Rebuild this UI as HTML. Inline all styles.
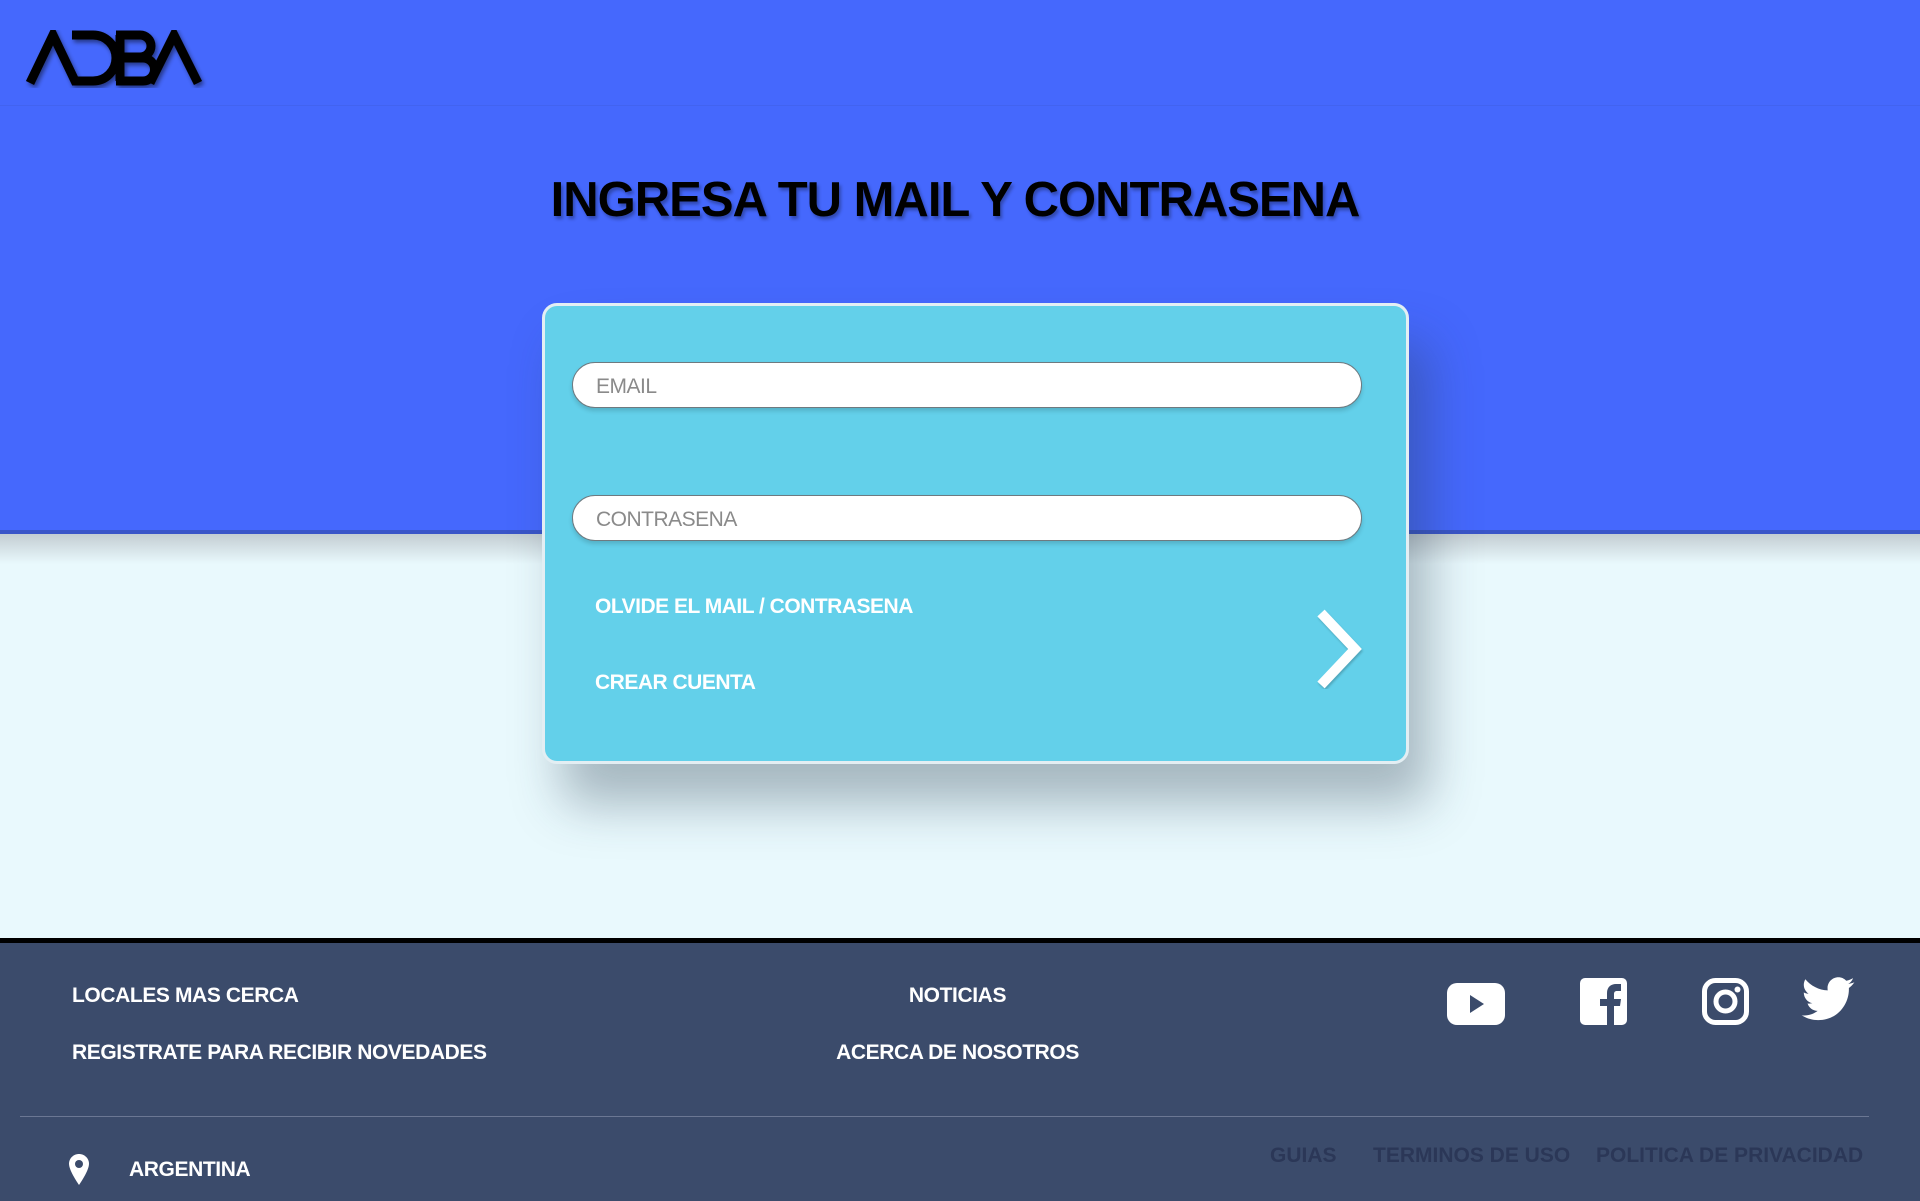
<!DOCTYPE html>
<html><head><meta charset="utf-8"><style>
*{margin:0;padding:0;box-sizing:border-box}
body{width:1920px;height:1201px;overflow:hidden;font-family:"Liberation Sans",sans-serif;background:#e9f9fd;position:relative}
.top{position:absolute;left:0;top:0;width:1920px;height:531px;background:#4568fd}
.hdrline{position:absolute;left:0;top:105px;width:1920px;height:1px;background:#4263f0}
.sep{position:absolute;left:0;top:530px;width:1920px;height:4px;background:#3a55c8}
.shade{position:absolute;left:0;top:534px;width:1920px;height:30px;background:linear-gradient(#c3cdd2,#e9f9fd)}
h1{position:absolute;left:0;width:1910px;top:172px;text-align:center;font-size:49px;font-weight:700;letter-spacing:-1px;color:#000;text-shadow:2px 3px 3px rgba(0,0,0,.3)}
.card{position:absolute;left:542px;top:303px;width:867px;height:461px;background:#63d0ea;border:3px solid #e3eef3;border-radius:15px;box-shadow:20px 40px 50px rgba(40,60,80,.35)}
.inp{position:absolute;left:27px;width:790px;height:46px;background:#fff;border:1px solid #6e7a80;border-radius:23px;box-shadow:0 3px 4px rgba(0,0,0,.15);font-size:21px;color:#8a8a8a;padding-left:23px;line-height:48px;letter-spacing:-0.5px}
.lnk{position:absolute;left:50px;color:#fff;font-size:21px;font-weight:700;letter-spacing:-0.5px}
.foot{position:absolute;left:0;top:938px;width:1920px;height:263px;background:#3b4b6b;border-top:5px solid #000}
.fl{position:absolute;color:#fff;font-weight:700;font-size:21px;letter-spacing:-0.4px}
.bl{position:absolute;color:#2b3757;font-weight:700;font-size:21px;top:1144px;letter-spacing:0}
</style></head><body>
<div class="top"></div><div class="hdrline"></div><div class="sep"></div><div class="shade"></div>
<svg style="position:absolute;left:0;top:0" width="230" height="105" viewBox="0 0 230 105">
<defs><filter id="sh"><feDropShadow dx="2" dy="3" stdDeviation="2" flood-opacity=".45"/></filter></defs>
<g filter="url(#sh)" fill="none" stroke="#000" stroke-width="9">
<path d="M30 83 L53 35 L76 83"/>
<path d="M72 35 H93 A23 23 0 0 1 93 81 H72"/>
<path d="M120 35 V81 M116 35 H140 A11 11 0 0 1 140 57 H120 M120 58 H143 A11.5 11.5 0 0 1 143 81 H116"/>
<path d="M150 83 L174 35 L198 83"/>
</g></svg>
<h1>INGRESA TU MAIL Y CONTRASENA</h1>
<div class="card">
<div class="inp" style="top:56px">EMAIL</div>
<div class="inp" style="top:189px">CONTRASENA</div>
<div class="lnk" style="top:289px">OLVIDE EL MAIL / CONTRASENA</div>
<div class="lnk" style="top:365px">CREAR CUENTA</div>
<svg style="position:absolute;left:770px;top:303px" width="55" height="80" viewBox="0 0 55 80"><path d="M6 4 L40 40 L6 76" fill="none" stroke="#fff" stroke-width="10" style="filter:drop-shadow(1px 2px 1px rgba(0,0,0,.2))"/></svg>
</div>
<div class="foot"></div>
<div class="fl" style="left:72px;top:984px">LOCALES MAS CERCA</div>
<div class="fl" style="left:72px;top:1041px">REGISTRATE PARA RECIBIR NOVEDADES</div>
<div class="fl" style="left:0;width:1915px;text-align:center;top:984px">NOTICIAS</div>
<div class="fl" style="left:0;width:1915px;text-align:center;top:1041px">ACERCA DE NOSOTROS</div>
<svg style="position:absolute;left:1447px;top:983px" width="58" height="42" viewBox="0 0 58 42"><rect x="0" y="0" width="58" height="42" rx="10" fill="#fff"/><path d="M23 12 L37 21 L23 30Z" fill="#3b4b6b"/></svg>
<svg style="position:absolute;left:1580px;top:978px" width="47" height="47" viewBox="0 0 47 47"><rect width="47" height="47" rx="5" fill="#fff"/><path d="M27 47 V28 H20 V21 H27 V15 C27 9 31 6 36 6 H41 V13 H37 C35 13 34 14 34 16 V21 H41 L40 28 H34 V47Z" fill="#3b4b6b"/></svg>
<svg style="position:absolute;left:1702px;top:978px" width="47" height="47" viewBox="0 0 47 47"><rect x="2.5" y="2.5" width="42" height="42" rx="11" fill="none" stroke="#fff" stroke-width="5"/><circle cx="23.5" cy="23.5" r="9.5" fill="none" stroke="#fff" stroke-width="5"/><circle cx="35.5" cy="11.5" r="3" fill="#fff"/></svg>
<svg style="position:absolute;left:1801px;top:977px" width="54" height="44" viewBox="0 0 24 20"><path d="M24 2.4c-.9.4-1.8.6-2.8.8 1-.6 1.8-1.6 2.2-2.7-1 .6-2 1-3.100 1.2C19.4.7 18.1.1 16.7.1c-2.7 0-4.9 2.2-4.9 4.9 0 .4 0 .8.1 1.1C7.8 5.9 4.2 4 1.7 1 1.3 1.7 1 2.6 1 3.5c0 1.7.9 3.2 2.2 4.1-.8 0-1.6-.2-2.2-.6v.1c0 2.4 1.7 4.4 3.9 4.8-.4.1-.8.2-1.3.2-.3 0-.6 0-.9-.1.6 2 2.4 3.4 4.6 3.4-1.7 1.3-3.800 2.1-6.1 2.1-.4 0-.8 0-1.2-.1 2.2 1.4 4.8 2.2 7.5 2.2 9.1 0 14-7.5 14-14v-.6c1-.7 1.8-1.6 2.5-2.600z" fill="#fff"/></svg>
<div style="position:absolute;left:20px;top:1116px;width:1849px;height:1px;background:#6b7793"></div>
<svg style="position:absolute;left:69px;top:1154px" width="20" height="31" viewBox="0 0 20 31"><path d="M10 0C4.5 0 0 4.3 0 9.8 0 17 10 31 10 31S20 17 20 9.8C20 4.3 15.5 0 10 0Z" fill="#fff"/><circle cx="10" cy="10" r="4" fill="#3b4b6b"/></svg>
<div class="fl" style="left:129px;top:1158px">ARGENTINA</div>
<div class="bl" style="left:1270px">GUIAS</div>
<div class="bl" style="left:1373px">TERMINOS DE USO</div>
<div class="bl" style="left:1596px">POLITICA DE PRIVACIDAD</div>
</body></html>
